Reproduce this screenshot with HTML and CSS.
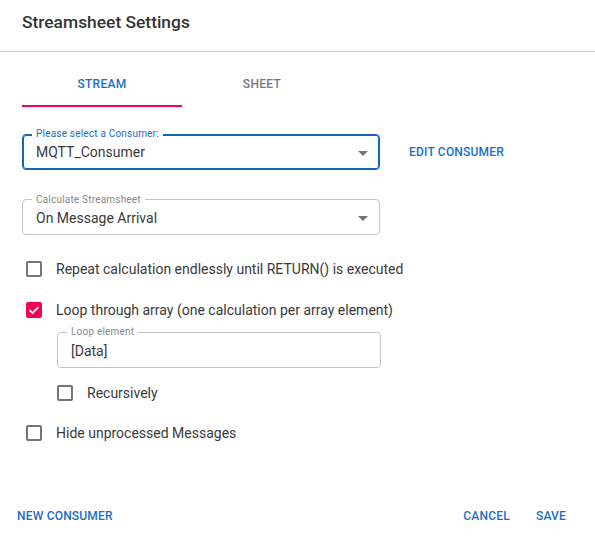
FILE: index.html
```html
<!DOCTYPE html>
<html>
<head>
<meta charset="utf-8">
<link rel="stylesheet" href="styles.css">
</head>
<body>
<div class="dialog">
  <div class="header"><h2 class="title">Streamsheet Settings</h2></div>
  <div class="content">
    <div class="tabs">
      <div class="tab active">STREAM</div>
      <div class="tab">SHEET</div>
    </div>
    <div class="select-row">
      <div class="field focused">
        <span class="label">Please select a Consumer:</span>
        <span class="value">MQTT_Consumer</span>
        <span class="arrow"></span>
      </div>
      <span class="btn edit">EDIT CONSUMER</span>
    </div>
    <div class="field second">
      <span class="label">Calculate Streamsheet</span>
      <span class="value">On Message Arrival</span>
      <span class="arrow"></span>
    </div>
    <div class="check first-check">
      <span class="box"></span>
      <span class="check-text">Repeat calculation endlessly until RETURN() is executed</span>
    </div>
    <div class="check">
      <span class="box checked"><svg viewBox="0 0 16 16" width="16" height="16"><path d="M3.6 8.2 L6.6 11 L12.4 5.2" fill="none" stroke="#fff" stroke-width="1.8"/></svg></span>
      <span class="check-text">Loop through array (one calculation per array element)</span>
    </div>
    <div class="nested">
      <div class="field loop">
        <span class="label">Loop element</span>
        <span class="value">[Data]</span>
      </div>
      <div class="check nested-check">
        <span class="box"></span>
        <span class="check-text">Recursively</span>
      </div>
    </div>
    <div class="check last-check">
      <span class="box"></span>
      <span class="check-text">Hide unprocessed Messages</span>
    </div>
  </div>
  <div class="footer">
    <span class="btn">NEW CONSUMER</span>
    <span class="spacer"></span>
    <span class="btn">CANCEL</span>
    <span class="btn save">SAVE</span>
  </div>
</div>
</body>
</html>
```

FILE: styles.css
```css
* { box-sizing: border-box; }
html, body { margin: 0; padding: 0; background: #fff; }
body { font-family: Roboto, "Liberation Sans", sans-serif; color: #3a3a3a; }

.dialog {
  width: 595px;
  height: 536px;
  display: flex;
  flex-direction: column;
}

.header {
  height: 52px;
  padding: 10px 22px 0;
  border-bottom: 1px solid #c9c9c9;
}
.title {
  margin: 0;
  font-size: 17.4px;
  line-height: 24px;
  font-weight: 500;
  color: #333;
}

.content {
  padding: 0 22px;
  display: flex;
  flex-direction: column;
}

.tabs {
  display: flex;
  margin-top: 7px;
  height: 48px;
}
.tab {
  width: 160px;
  display: flex;
  align-items: center;
  justify-content: center;
  font-size: 12px;
  font-weight: 500;
  letter-spacing: 0.3px;
  color: #777;
  padding-top: 2px;
}
.tab.active {
  color: #1a6fc4;
  border-bottom: 2px solid #f50057;
  padding-top: 4px;
}

.select-row {
  display: flex;
  align-items: center;
  margin-top: 27px;
}

.field {
  position: relative;
  height: 36px;
  width: 358px;
  border: 1px solid #c4c4c4;
  border-radius: 4px;
  display: flex;
  align-items: center;
  padding-left: 13px;
}
.field.focused {
  border-color: #1565c0;
  box-shadow: inset 0 0 0 1px #1565c0;
}
.field.second { margin-top: 29px; padding-top: 2px; }
.field.second .label { top: -6px; }

.label {
  position: absolute;
  top: -7px;
  left: 9px;
  padding: 0 4px;
  background: #fff;
  font-size: 10px;
  line-height: 12px;
  color: #888;
  letter-spacing: 0.2px;
}
.focused .label { color: #1a6fc4; }

.value {
  font-size: 14px;
  color: #3a3a3a;
}
.arrow {
  position: absolute;
  right: 11px;
  top: 16px;
  width: 0;
  height: 0;
  border-left: 5px solid transparent;
  border-right: 5px solid transparent;
  border-top: 5px solid #757575;
}

.btn {
  font-size: 12px;
  font-weight: 500;
  letter-spacing: 0.2px;
  color: #1a6fc4;
}
.edit { margin-left: 29px; }

.check {
  display: flex;
  align-items: center;
  height: 40px;
  padding-left: 4px;
  margin-top: 1px;
}
.first-check { margin-top: 14px; }
.last-check { margin-top: 0; }
.box {
  width: 16px;
  height: 16px;
  border: 2px solid #757575;
  border-radius: 2px;
  flex-shrink: 0;
  display: flex;
}
.box.checked {
  background: #f50057;
  border: none;
}
.check-text {
  margin-left: 14px;
  font-size: 14px;
  color: #3a3a3a;
}

.nested {
  margin-left: 35px;
  display: flex;
  flex-direction: column;
}
.field.loop {
  width: 324px;
  margin-top: 2px;
  padding-top: 1px;
}
.check.nested-check {
  padding-left: 0;
  margin-top: 5px;
}

.footer {
  margin-top: auto;
  height: 40px;
  display: flex;
  align-items: center;
  padding: 0 29px 0 17px;
}
.spacer { flex: 1; }
.save { margin-left: 26px; }
```
